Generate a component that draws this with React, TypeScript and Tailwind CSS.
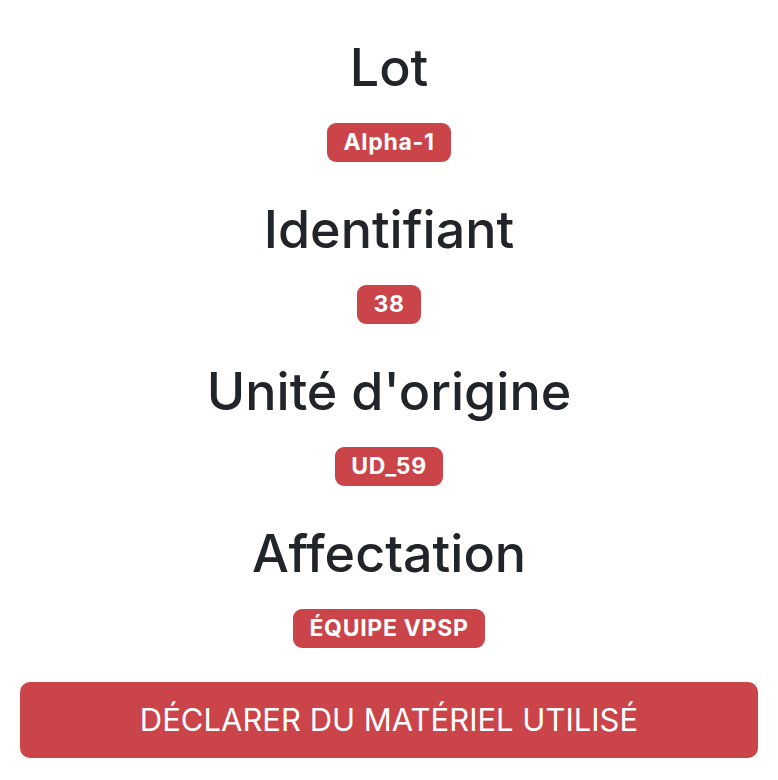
const fields = [
  { label: "Lot", value: "Alpha-1" },
  { label: "Identifiant", value: "38" },
  { label: "Unité d'origine", value: "UD_59" },
  { label: "Affectation", value: "ÉQUIPE VPSP" },
];

export default function App() {
  return (
    <div className="min-h-[780px] bg-white px-5 pt-[37px] font-['Inter',sans-serif] text-[#212529]">
      <div className="flex flex-col items-center">
        {fields.map((f) => (
          <div key={f.label} className="flex flex-col items-center pb-[37px]">
            <h2 className="text-[52px] font-medium leading-[62px]">{f.label}</h2>
            <span className="mt-[24px] rounded-[9px] bg-[#cb444a] px-[16px] py-[8px] text-[23px] font-bold leading-[23px] tracking-[0.03em] text-white">
              {f.value}
            </span>
          </div>
        ))}
      </div>
      <button className="-mt-[3px] w-full rounded-[10px] bg-[#cb444a] py-[19px] text-[31px] leading-[38px] text-white uppercase">
        Déclarer du matériel utilisé
      </button>
    </div>
  );
}
